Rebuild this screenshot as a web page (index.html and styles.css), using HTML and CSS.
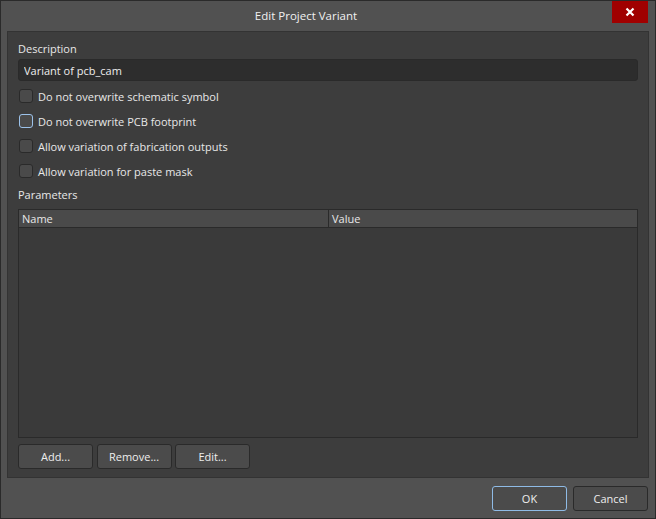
FILE: index.html
```
<!DOCTYPE html>
<html lang="en">
<head>
    <meta charset="UTF-8">
    <title>Edit Project Variant</title>
    <link rel="stylesheet" href="styles.css">
</head>
<body>

<div class="window">
    <div class="titlebar">
        <span class="title">Edit Project Variant</span>
        <div class="close-btn">
            <svg width="10" height="10" viewBox="0 0 10 10">
                <path d="M1.5 1.5 L8.5 8.5 M8.5 1.5 L1.5 8.5" stroke="#fff" stroke-width="2.2"/>
            </svg>
        </div>
    </div>

    <div class="panel">
        <div class="label desc-label">Description</div>
        <input type="text" class="text-field" value="Variant of pcb_cam">

        <div class="checks">
            <label class="check"><span class="box"></span>Do not overwrite schematic symbol</label>
            <label class="check"><span class="box focused"></span>Do not overwrite PCB footprint</label>
            <label class="check"><span class="box"></span>Allow variation of fabrication outputs</label>
            <label class="check"><span class="box"></span>Allow variation for paste mask</label>
        </div>

        <div class="label params-label">Parameters</div>
        <div class="grid">
            <div class="grid-head">
                <div class="col-name">Name</div>
                <div class="col-value">Value</div>
            </div>
        </div>

        <div class="grid-buttons">
            <button class="btn">Add...</button>
            <button class="btn">Remove...</button>
            <button class="btn">Edit...</button>
        </div>
    </div>

    <div class="footer">
        <button class="btn default">OK</button>
        <button class="btn">Cancel</button>
    </div>
</div>

</body>
</html>
```

FILE: styles.css
```
body {
    margin: 0;
    background: #2b2b2b;
    font-family: "Open Sans", "Noto Sans", Arial, sans-serif;
    font-size: 11px;
    color: #e8e8e8;
}
.window {
    width: 654px;
    height: 517px;
    border: 1px solid #2a2a2a;
    background-color: #515151;
    display: flex;
    flex-direction: column;
}
.titlebar {
    height: 30px;
    display: flex;
    align-items: flex-start;
    position: relative;
}
/* centrado en el espacio a la izquierda del boton de cerrar */
.title {
    width: 610px;
    text-align: center;
    font-size: 11.5px;
    margin-top: 7px;
    color: #f0f0f0;
}
.close-btn {
    position: absolute;
    top: 0;
    right: 7px;
    width: 36px;
    height: 22px;
    background-color: #a00000;
    display: flex;
    align-items: center;
    justify-content: center;
}
.panel {
    margin: 0 6px;
    height: 445px;
    border: 1px solid #333;
    background-color: #3d3d3d;
    padding: 0 10px;
    display: flex;
    flex-direction: column;
}
.label {
    height: 16px;
    line-height: 16px;
}
.desc-label {
    margin-top: 9px;
    margin-bottom: 2px;
}
.text-field {
    height: 22px;
    box-sizing: border-box;
    margin: 0;
    padding: 0 5px;
    border: 1px solid #2a2a2a;
    border-radius: 3px;
    background-color: #2d2d2d;
    color: #eee;
    font-family: inherit;
    font-size: 11px;
    outline: none;
}
.checks {
    margin-top: 8px;
    display: flex;
    flex-direction: column;
}
.check {
    height: 25px;
    display: flex;
    align-items: flex-start;
    line-height: 15px;
}
.box {
    width: 12px;
    height: 12px;
    border: 1px solid #2a2a2a;
    border-radius: 3px;
    background-color: #4a4a4a;
    margin: 0 5px 0 1px;
}
.box.focused {
    border-color: #9cc2ea;
}
.params-label {
    margin-top: -2px;
}
.grid {
    margin-top: 6px;
    height: 227px;
    border: 1px solid #2a2a2a;
    background-color: #3a3a3a;
}
.grid-head {
    display: flex;
    height: 17px;
    line-height: 17px;
    background-color: #4a4a4a;
    border-bottom: 1px solid #2a2a2a;
}
.col-name {
    width: 306px;
    padding-left: 3px;
    border-right: 1px solid #2a2a2a;
}
.col-value {
    padding-left: 3px;
}
.grid-buttons {
    margin-top: 6px;
    display: flex;
    gap: 3.5px;
}
.btn {
    width: 75px;
    height: 25px;
    box-sizing: border-box;
    border: 1px solid #2a2a2a;
    border-radius: 3px;
    background-color: #4b4b4b;
    color: #eee;
    font-family: inherit;
    font-size: 11px;
    padding: 0;
}
.footer {
    display: flex;
    justify-content: flex-end;
    gap: 6px;
    padding: 8px 7px 0 0;
}
.btn.default {
    border-color: #8fbbe6;
}
```
